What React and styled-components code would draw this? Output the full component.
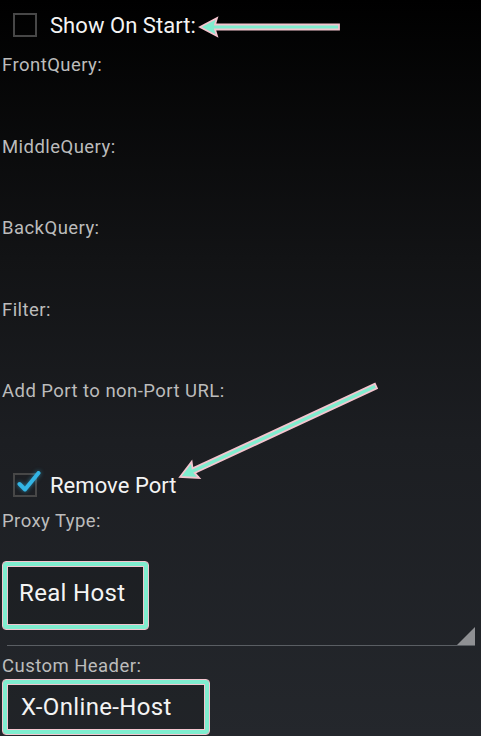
import React from 'react';
import styled, {createGlobalStyle} from 'styled-components';

const GlobalStyle = createGlobalStyle`
  html, body {
    margin: 0;
    padding: 0;
    background: #000;
  }
  body {
    font-family: Roboto, "Noto Sans", "Liberation Sans", sans-serif;
  }
`;

const colors = {
  text: '#f4f4f4',
  label: '#bcbcbc',
  boxBorder: '#474747',
  holoBlue: '#33b5e5',
  mint: '#80edcf',
  pink: '#f4c5cf',
  divider: '#5a5e63',
};

const Page = styled.div`
  position: relative;
  width: 481px;
  height: 736px;
  overflow: hidden;
  background: linear-gradient(to bottom, #000 0, #121315 35%, #1c1e22 60%, #24272c 100%);
  display: flex;
  flex-direction: column;
`;

const CheckRow = styled.label`
  display: flex;
  align-items: center;
  gap: 13px;
  height: ${props => props.height}px;
  padding-left: 13px;
  color: ${colors.text};
  font-size: 22px;
  letter-spacing: 0.05px;
`;

const Box = styled.span`
  position: relative;
  box-sizing: border-box;
  width: 24px;
  height: 24px;
  border: 2px solid ${colors.boxBorder};
  flex-shrink: 0;
`;

const Tick = styled.svg`
  position: absolute;
  left: 2px;
  top: -6px;
  overflow: visible;
  filter: drop-shadow(0 0 2px rgba(51, 181, 229, 0.6));
`;

const FieldLabel = styled.div`
  height: ${props => props.height || 30}px;
  line-height: ${props => props.height || 30}px;
  padding-left: 2px;
  font-size: 18.5px;
  letter-spacing: 0.45px;
  color: ${colors.label};
`;

const EmptyField = styled.div`
  height: ${props => props.height}px;
`;

const Spinner = styled.div`
  position: relative;
  height: 113px;
  margin: 0 6px 7px 7px;
  padding-top: 28px;
  box-sizing: border-box;
  border-bottom: 1px solid ${colors.divider};

  &::after {
    content: '';
    position: absolute;
    right: 0;
    bottom: 0;
    width: 0;
    height: 0;
    border-left: 18px solid transparent;
    border-bottom: 18px solid #8f9093;
  }
`;

const Marked = styled.div`
  display: inline-flex;
  align-items: center;
  box-sizing: border-box;
  width: ${props => props.width}px;
  height: ${props => props.height}px;
  margin-left: ${props => props.offset || 0}px;
  padding: 0 0 ${props => props.lift || 0}px ${props => props.indent || 18}px;
  border: 1.5px solid ${colors.pink};
  border-radius: 4px;
  box-shadow: inset 0 0 0 4px ${colors.mint}, inset 0 0 0 5px ${colors.pink};
  background: rgba(0, 0, 0, 0.08);
  color: ${colors.text};
  font-size: 24px;
  letter-spacing: 0.35px;
`;

const Overlay = styled.svg`
  position: absolute;
  left: 0;
  top: 0;
  pointer-events: none;
`;

const Arrow = ({x, y, angle, length}) => (
  <g transform={`translate(${x} ${y}) rotate(${angle})`}>
    <polygon
      points={`0,0 17,-9 15,-2.5 ${length},-2.5 ${length},2.5 15,2.5 17,9`}
      fill={colors.mint}
      stroke={colors.pink}
      strokeWidth="1.8"
      strokeLinejoin="miter"
    />
  </g>
);

const fields = ['FrontQuery:', 'MiddleQuery:', 'BackQuery:', 'Filter:'];

const App = () => (
  <>
    <GlobalStyle />
    <Page>
      <CheckRow height={50}>
        <Box />
        Show On Start:
      </CheckRow>
      {fields.map(f => (
        <React.Fragment key={f}>
          <FieldLabel>{f}</FieldLabel>
          <EmptyField height={51.5} />
        </React.Fragment>
      ))}
      <FieldLabel>Add Port to non-Port URL:</FieldLabel>
      <EmptyField height={55} />
      <CheckRow height={48}>
        <Box>
          <Tick width="24" height="22" viewBox="0 0 24 22">
            <path
              d="M2.5 15 L8 20.5 L21.5 4"
              fill="none"
              stroke={colors.holoBlue}
              strokeWidth="4"
              strokeLinecap="round"
              strokeLinejoin="round"
            />
          </Tick>
        </Box>
        Remove Port
      </CheckRow>
      <FieldLabel height={24}>Proxy Type:</FieldLabel>
      <Spinner>
        <Marked width={147} height={69} offset={-5} lift={5} indent={16}>
          Real Host
        </Marked>
      </Spinner>
      <FieldLabel height={26}>Custom Header:</FieldLabel>
      <Marked width={208} height={56} offset={2}>
        X-Online-Host
      </Marked>
      <Overlay width="481" height="736">
        <Arrow x={200} y={27} angle={0} length={139} />
        <Arrow x={180} y={477} angle={-24.9} length={216} />
      </Overlay>
    </Page>
  </>
);

export default App;
